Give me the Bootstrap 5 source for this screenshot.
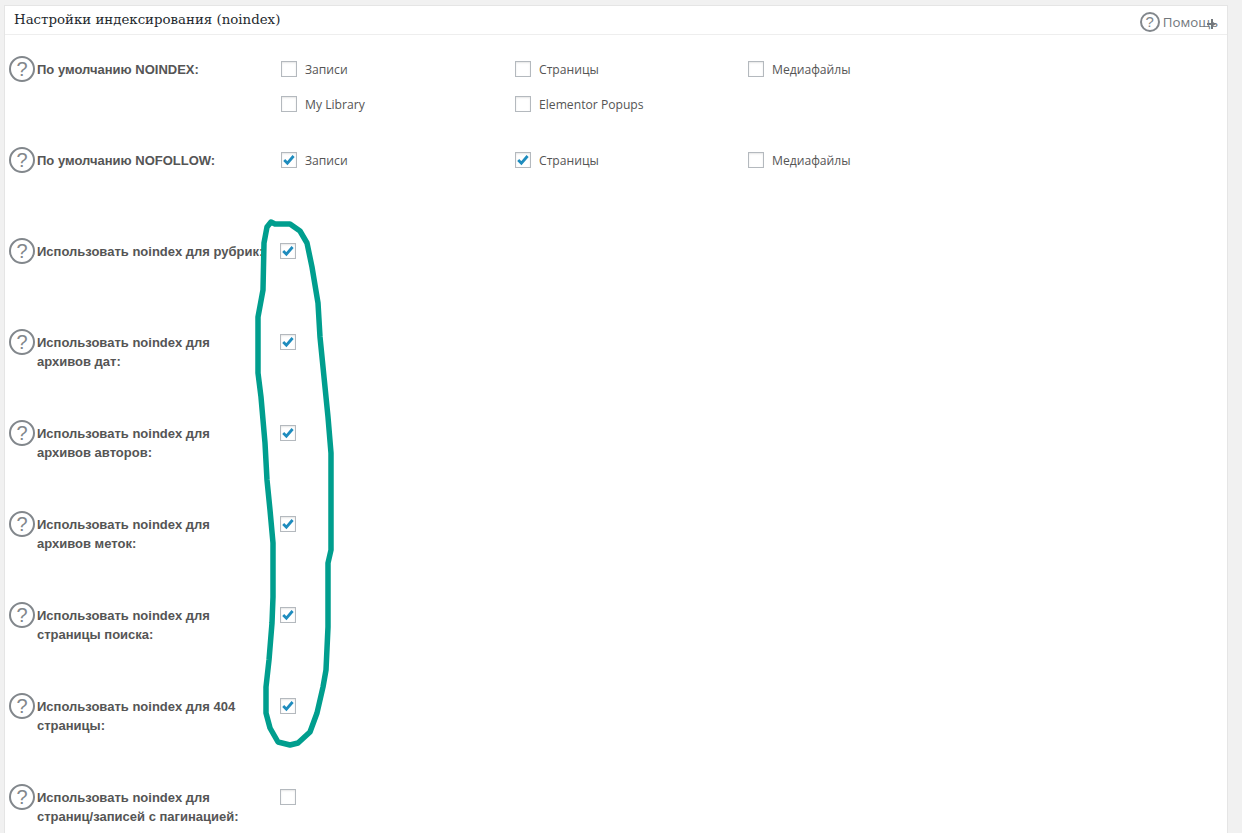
<!DOCTYPE html>
<html lang="ru">
<head>
<meta charset="utf-8">
<title>Настройки индексирования</title>
<link href="https://cdn.jsdelivr.net/npm/bootstrap@5.3.0/dist/css/bootstrap.min.css" rel="stylesheet">
<style>
html,body{height:833px;overflow:hidden}
body{background:#f1f1f1;font-family:"Open Sans",sans-serif;color:#555;position:relative}
.panel-box{margin:5px 0 0 4px;width:1224px;height:900px;background:#fff;border:1px solid #e5e5e5;border-radius:0}
.panel-head{height:29px;border-bottom:1px solid #eee;padding:0 10px 0 9px;background:#fff}
.panel-title{font:13.35px/26px "DejaVu Serif",serif;color:#23282d;margin:0}
.help-link{font-size:13.3px;color:#72777c;line-height:20px;position:relative;margin-top:4px;margin-right:-1px}
.help-link .ring{width:20px;height:20px;font-size:15px;line-height:16px;margin-right:3px}
.plus-mark{position:absolute;right:1px;top:7px}
.ring{display:inline-flex;align-items:center;justify-content:center;flex:none;border:2px solid #82878c;border-radius:50%;color:#82878c;font-family:"Liberation Sans",sans-serif}
.panel-rows{padding:21px 0 0 4px}
.opt-row{height:91px;gap:2px}
.opt-row .ring{width:26px;height:26px;font-size:20px}
.opt-label{width:242px;font:bold 13px/19px "Liberation Sans",sans-serif;color:#555;padding-top:4px;margin:0}
.opt-grid{display:grid;grid-template-columns:234px 233px 233px;grid-auto-rows:26px;row-gap:9px}
.opt-single{margin-left:-1px}
.opt-item{display:flex;align-items:center;gap:8px;font-size:12.15px;color:#555}
.opt-text{padding-top:2px}
.opt-item .form-check-input{width:16px;height:16px;margin:0;border:1px solid #b4b9be;border-radius:0;box-shadow:inset 0 1px 2px rgba(0,0,0,.1);flex:none;float:none;opacity:1}
.opt-item .form-check-input:checked{background-color:#fff;border-color:#b4b9be;background-size:16px 16px;background-image:url("data:image/svg+xml,%3Csvg xmlns='http://www.w3.org/2000/svg' viewBox='0 0 16 16'%3E%3Cpath d='M3.2 8l3.2 3.2L12.6 4' fill='none' stroke='%231e8cbe' stroke-width='2.8'/%3E%3C/svg%3E")}
.loop-mark{position:absolute;left:0;top:0;pointer-events:none}
</style>
</head>
<body>
<div class="panel-box">
  <div class="panel-head d-flex justify-content-between align-items-center">
    <h2 class="panel-title">Настройки индексирования (noindex)</h2>
    <div class="help-link d-flex align-items-center">
      <span class="ring">?</span>Помощь
      <svg class="plus-mark" width="10" height="10" viewBox="0 0 10 10"><path d="M4 0h2v10H4z M0 4h4v2H0z" fill="#72777c"/><path d="M6 3l3 2-3 2z" fill="#72777c"/></svg>
    </div>
  </div>
  <div class="panel-rows">
    <div class="opt-row d-flex align-items-start">
      <span class="ring">?</span>
      <p class="opt-label">По умолчанию NOINDEX:</p>
      <div class="opt-grid">
        <label class="opt-item"><input class="form-check-input" type="checkbox"><span class="opt-text">Записи</span></label>
        <label class="opt-item"><input class="form-check-input" type="checkbox"><span class="opt-text">Страницы</span></label>
        <label class="opt-item"><input class="form-check-input" type="checkbox"><span class="opt-text">Медиафайлы</span></label>
        <label class="opt-item"><input class="form-check-input" type="checkbox"><span class="opt-text">My Library</span></label>
        <label class="opt-item"><input class="form-check-input" type="checkbox"><span class="opt-text">Elementor Popups</span></label>
      </div>
    </div>
    <div class="opt-row d-flex align-items-start">
      <span class="ring">?</span>
      <p class="opt-label">По умолчанию NOFOLLOW:</p>
      <div class="opt-grid">
        <label class="opt-item"><input class="form-check-input" type="checkbox" checked><span class="opt-text">Записи</span></label>
        <label class="opt-item"><input class="form-check-input" type="checkbox" checked><span class="opt-text">Страницы</span></label>
        <label class="opt-item"><input class="form-check-input" type="checkbox"><span class="opt-text">Медиафайлы</span></label>
      </div>
    </div>
    <div class="opt-row d-flex align-items-start">
      <span class="ring">?</span>
      <p class="opt-label">Использовать noindex для рубрик:</p>
      <div class="opt-grid opt-single"><label class="opt-item"><input class="form-check-input" type="checkbox" checked></label></div>
    </div>
    <div class="opt-row d-flex align-items-start">
      <span class="ring">?</span>
      <p class="opt-label">Использовать noindex для<br>архивов дат:</p>
      <div class="opt-grid opt-single"><label class="opt-item"><input class="form-check-input" type="checkbox" checked></label></div>
    </div>
    <div class="opt-row d-flex align-items-start">
      <span class="ring">?</span>
      <p class="opt-label">Использовать noindex для<br>архивов авторов:</p>
      <div class="opt-grid opt-single"><label class="opt-item"><input class="form-check-input" type="checkbox" checked></label></div>
    </div>
    <div class="opt-row d-flex align-items-start">
      <span class="ring">?</span>
      <p class="opt-label">Использовать noindex для<br>архивов меток:</p>
      <div class="opt-grid opt-single"><label class="opt-item"><input class="form-check-input" type="checkbox" checked></label></div>
    </div>
    <div class="opt-row d-flex align-items-start">
      <span class="ring">?</span>
      <p class="opt-label">Использовать noindex для<br>страницы поиска:</p>
      <div class="opt-grid opt-single"><label class="opt-item"><input class="form-check-input" type="checkbox" checked></label></div>
    </div>
    <div class="opt-row d-flex align-items-start">
      <span class="ring">?</span>
      <p class="opt-label">Использовать noindex для 404<br>страницы:</p>
      <div class="opt-grid opt-single"><label class="opt-item"><input class="form-check-input" type="checkbox" checked></label></div>
    </div>
    <div class="opt-row d-flex align-items-start">
      <span class="ring">?</span>
      <p class="opt-label">Использовать noindex для<br>страниц/записей с пагинацией:</p>
      <div class="opt-grid opt-single"><label class="opt-item"><input class="form-check-input" type="checkbox"></label></div>
    </div>
  </div>
</div>
<svg class="loop-mark" width="1242" height="833" viewBox="0 0 1242 833"><path d="M271 222L275 224L290 224L300 231L307 243L312 267L318 303L320 337L324 377L328 417L331 453L331 550L328 563L328 627L326 670L323 687L317 713L310 732L298 743L290 745L278 742L270 728L266 713L266 687L269 660L272 623L273 597L273 543L270 510L267 480L265 443L261 397L258 373L258 317L263 290L264 243L267 227Z" fill="none" stroke="#009e8e" stroke-width="5.5" stroke-linejoin="round"/></svg>
<script src="https://cdn.jsdelivr.net/npm/bootstrap@5.3.0/dist/js/bootstrap.bundle.min.js"></script>
</body>
</html>
